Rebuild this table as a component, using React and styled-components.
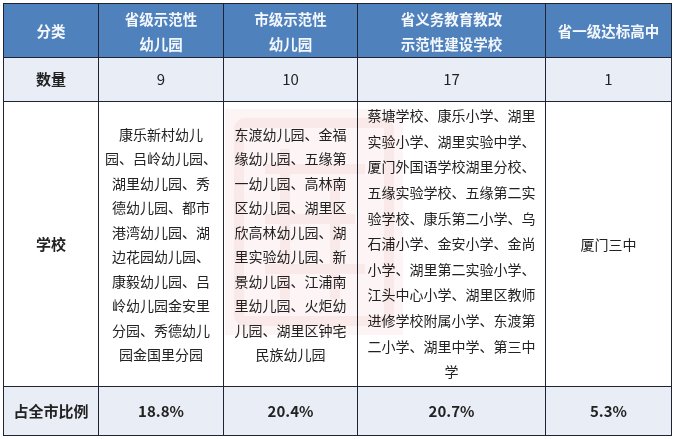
import React from 'react'
import styled, { createGlobalStyle } from 'styled-components'

const GlobalStyle = createGlobalStyle`
  html, body {
    margin: 0;
    padding: 0;
    background: #ffffff;
  }
  body {
    font-family: "Noto Sans CJK SC", "Noto Sans", sans-serif;
  }
`

const Page = styled.div`
  width: 674px;
  height: 439px;
  box-sizing: border-box;
  padding: 3px 0 0 3px;
  background: #fff;
`

const Frame = styled.div`
  position: relative;
  width: 668px;
`

const Table = styled.table`
  width: 668px;
  border-collapse: collapse;
  table-layout: fixed;
  border: 1.5px solid #1e2433;
`

const HeadRow = styled.tr`
  height: 54px;
  background: #4f81bd;
`

const Row = styled.tr`
  height: ${p => p.$h}px;
  background: ${p => (p.$shade ? '#e9edf5' : '#ffffff')};
`

const Th = styled.th`
  border: 1px solid #1e2433;
  color: #f4f7fc;
  font-size: 14.5px;
  font-weight: 700;
  line-height: 25px;
  text-align: center;
  vertical-align: middle;
  padding: 0;
`

const Td = styled.td`
  border: 1px solid #1e2433;
  color: #222;
  font-size: ${p => p.$size || 14}px;
  font-weight: ${p => (p.$bold ? 700 : 400)};
  line-height: ${p => p.$lh || 24.5}px;
  text-align: center;
  vertical-align: middle;
  padding: 0;
`

const Line = styled.span`
  display: block;
  white-space: nowrap;
`

const Watermark = styled.div`
  position: absolute;
  left: 222px;
  top: 106px;
  width: 178px;
  height: 226px;
  pointer-events: none;
  background: rgba(228, 120, 120, 0.07);
  mix-blend-mode: multiply;
`

const col2 = [
  '康乐新村幼儿', '园、吕岭幼儿园、', '湖里幼儿园、秀', '德幼儿园、都市', '港湾幼儿园、湖',
  '边花园幼儿园、', '康毅幼儿园、吕', '岭幼儿园金安里', '分园、秀德幼儿', '园金国里分园',
]
const col3 = [
  '东渡幼儿园、金福', '缘幼儿园、五缘第', '一幼儿园、高林南', '区幼儿园、湖里区', '欣高林幼儿园、湖',
  '里实验幼儿园、新', '景幼儿园、江浦南', '里幼儿园、火炬幼', '儿园、湖里区钟宅', '民族幼儿园',
]
const col4 = [
  '蔡塘学校、康乐小学、湖里', '实验小学、湖里实验中学、', '厦门外国语学校湖里分校、', '五缘实验学校、五缘第二实',
  '验学校、康乐第二小学、乌', '石浦小学、金安小学、金尚', '小学、湖里第二实验小学、', '江头中心小学、湖里区教师',
  '进修学校附属小学、东渡第', '二小学、湖里中学、第三中', '学',
]

const Lines = ({ items }) => items.map((t, i) => <Line key={i}>{t}</Line>)

export default function App () {
  return (
    <Page>
      <GlobalStyle />
      <Frame>
        <Table>
          <colgroup>
            <col style={{ width: 95 }} />
            <col style={{ width: 125 }} />
            <col style={{ width: 134 }} />
            <col style={{ width: 188 }} />
            <col style={{ width: 126 }} />
          </colgroup>
          <tbody>
            <HeadRow>
              <Th>分类</Th>
              <Th><Line>省级示范性</Line><Line>幼儿园</Line></Th>
              <Th><Line>市级示范性</Line><Line>幼儿园</Line></Th>
              <Th><Line>省义务教育教改</Line><Line>示范性建设学校</Line></Th>
              <Th>省一级达标高中</Th>
            </HeadRow>
            <Row $h={44} $shade>
              <Td $bold $size={15}>数量</Td>
              <Td $size={15}>9</Td>
              <Td $size={15}>10</Td>
              <Td $size={15}>17</Td>
              <Td $size={15}>1</Td>
            </Row>
            <Row $h={285}>
              <Td $bold $size={15}>学校</Td>
              <Td><Lines items={col2} /></Td>
              <Td><Lines items={col3} /></Td>
              <Td $lh={25.6}><Lines items={col4} /></Td>
              <Td>厦门三中</Td>
            </Row>
            <Row $h={49} $shade>
              <Td $bold $size={15}>占全市比例</Td>
              <Td $bold $size={15}>18.8%</Td>
              <Td $bold $size={15}>20.4%</Td>
              <Td $bold $size={15}>20.7%</Td>
              <Td $bold $size={15}>5.3%</Td>
            </Row>
          </tbody>
        </Table>
        <Watermark>
          <svg width="178" height="226" viewBox="0 0 178 226">
            <g fill="none" stroke="rgba(205,70,70,0.07)" strokeWidth="10">
              <rect x="14" y="14" width="150" height="198" rx="6" />
              <path d="M40 60 h100 M40 110 h90 M60 40 v150 M110 70 v120 M40 160 h100" />
            </g>
          </svg>
        </Watermark>
      </Frame>
    </Page>
  )
}
